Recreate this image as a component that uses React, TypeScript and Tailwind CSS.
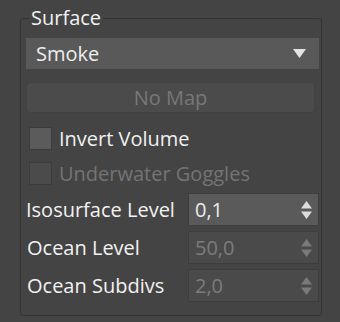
import React from 'react';

const font = { fontFamily: '"Open Sans", "Noto Sans", sans-serif' };

const Spinner: React.FC<{ value: string; disabled?: boolean }> = ({ value, disabled }) => (
    <div
        className={`flex items-center justify-between w-[131px] h-[33px] pl-[6px] pr-[6px] border ${
            disabled ? 'bg-[#4a4a4a] border-[#3d3d3d] text-[#7c7c7c]' : 'bg-[#5a5a5a] border-[#3d3d3d] text-[#ececec]'
        }`}
    >
        <span>{value}</span>
        <svg width="11" height="18" viewBox="0 0 11 18">
            <polygon points="5.5,0 11,7.5 0,7.5" fill={disabled ? '#7a7a7a' : '#dcdcdc'} />
            <polygon points="0,10.5 11,10.5 5.5,18" fill={disabled ? '#7a7a7a' : '#dcdcdc'} />
        </svg>
    </div>
);

const Checkbox: React.FC<{ label: string; disabled?: boolean }> = ({ label, disabled }) => (
    <div className="flex items-center h-[23px] pl-[3px] gap-[7px]">
        <div
            className={`w-[23px] h-[23px] border border-[#3c3c3c] ${disabled ? 'bg-[#4b4b4b]' : 'bg-[#5b5b5b]'}`}
        />
        <span className={disabled ? 'text-[#747474]' : 'text-[#f0f0f0]'}>{label}</span>
    </div>
);

const App: React.FC = () => {
    return (
        <div className="w-[340px] h-[322px] bg-[#444444] pt-[4px] pl-[20px] text-[20px]" style={font}>
            <fieldset className="w-[302px] border border-[#333333] rounded-[3px] pl-[5px] pr-[2px] pt-[6px] pb-[13px]">
                <legend className="ml-[3px] px-[2px] leading-[28px] text-[#f2f2f2]">Surface</legend>

                <div className="flex items-center justify-between h-[31px] bg-[#595959] pl-[10px] pr-[13px] text-[#eeeeee]">
                    <span>Smoke</span>
                    <svg width="13" height="9" viewBox="0 0 13 9">
                        <polygon points="0,0 13,0 6.5,9" fill="#e4e4e4" />
                    </svg>
                </div>

                <div className="mt-[13px] w-[289px] h-[31px] flex items-center justify-center rounded-[4px] bg-[#4b4b4b] border border-[#414141] text-[#787878]">
                    No Map
                </div>

                <div className="mt-[14px]">
                    <Checkbox label="Invert Volume" />
                </div>
                <div className="mt-[12px]">
                    <Checkbox label="Underwater Goggles" disabled />
                </div>

                <div className="mt-[8px] flex flex-col gap-[5px]">
                    <div className="flex items-center justify-between">
                        <span className="text-[#f2f2f2]">Isosurface Level</span>
                        <Spinner value="0,1" />
                    </div>
                    <div className="flex items-center justify-between">
                        <span className="pl-[1px] text-[#f2f2f2]">Ocean Level</span>
                        <Spinner value="50,0" disabled />
                    </div>
                    <div className="flex items-center justify-between">
                        <span className="pl-[1px] text-[#f2f2f2]">Ocean Subdivs</span>
                        <Spinner value="2,0" disabled />
                    </div>
                </div>
            </fieldset>
        </div>
    );
};

export default App;
